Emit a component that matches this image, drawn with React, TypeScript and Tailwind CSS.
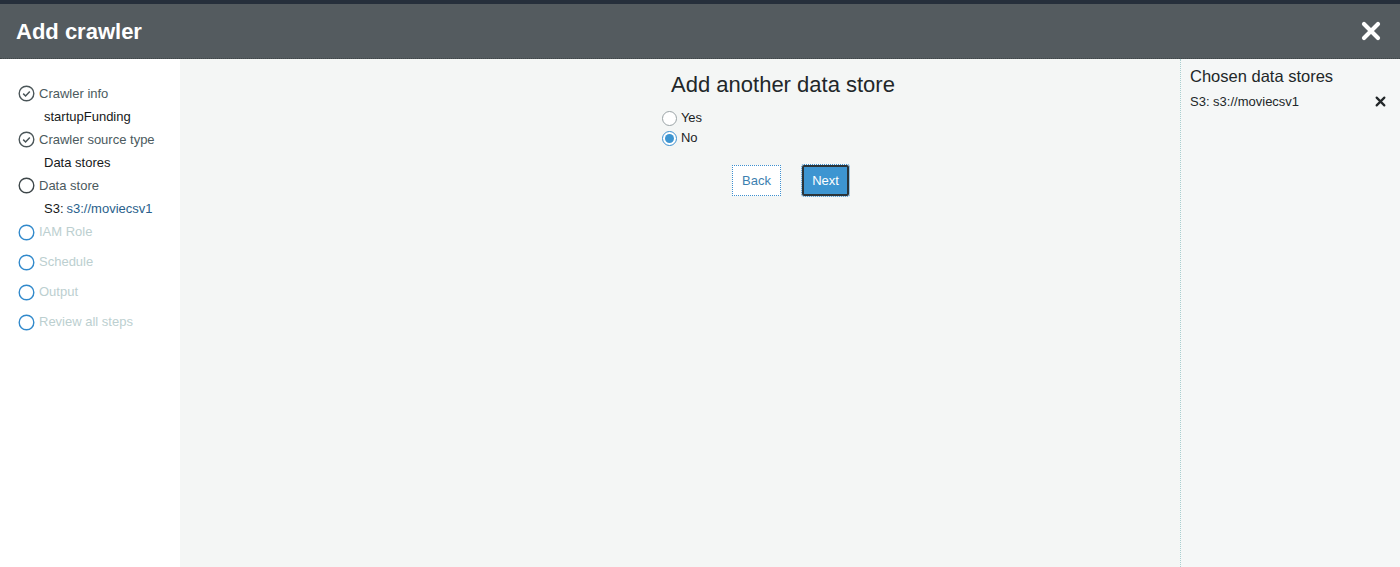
import React from "react";

const Check = ({ color }: { color: string }) => (
  <svg width="17" height="17" viewBox="0 0 17 17" fill="none">
    <circle cx="8.5" cy="8.5" r="7.3" stroke={color} strokeWidth="1.4" />
    <path d="M5.2 8.6 L7.6 11 L11.8 6.5" stroke={color} strokeWidth="1.5" fill="none" />
  </svg>
);

const Circle = ({ color }: { color: string }) => (
  <svg width="17" height="17" viewBox="0 0 17 17" fill="none">
    <circle cx="8.5" cy="8.5" r="7.3" stroke={color} strokeWidth="1.4" />
  </svg>
);

const XIcon = ({ size, stroke, color }: { size: number; stroke: number; color: string }) => (
  <svg width={size} height={size} viewBox="0 0 20 20">
    <path d="M3 3 L17 17 M17 3 L3 17" stroke={color} strokeWidth={stroke} strokeLinecap="round" />
  </svg>
);

export default function App() {
  const font = { fontFamily: '"Liberation Sans", Arial, sans-serif' };
  return (
    <div className="w-[1400px] h-[567px] flex flex-col overflow-hidden" style={font}>
      <div className="h-[4px] bg-[#262f3b]" />
      <div className="h-[55px] bg-[#545b5f] flex items-center justify-between pl-[16px] pr-[19px] border-b border-dotted border-[#3e4547]">
        <div className="text-white font-bold text-[22px] pt-[1px]">Add crawler</div>
        <XIcon size={20} stroke={4.2} color="#ffffff" />
      </div>
      <div className="flex flex-1">
        <div className="w-[180px] bg-white pt-[23px] pl-[18px]">
          <div className="flex flex-col text-[13px]">
            <div className="flex items-center gap-[4px] h-[23px]">
              <Check color="#4a5558" />
              <span className="text-[#4b5a5e]">Crawler info</span>
            </div>
            <div className="h-[23px] pl-[26px] flex items-center text-[#16191a]">startupFunding</div>
            <div className="flex items-center gap-[4px] h-[23px]">
              <Check color="#4a5558" />
              <span className="text-[#4b5a5e]">Crawler source type</span>
            </div>
            <div className="h-[23px] pl-[26px] flex items-center text-[#16191a]">Data stores</div>
            <div className="flex items-center gap-[4px] h-[23px]">
              <Circle color="#3d4649" />
              <span className="text-[#4b5a5e]">Data store</span>
            </div>
            <div className="h-[23px] pl-[26px] flex items-center text-[#16191a]">
              S3: <span className="text-[#2a5f8c] ml-[3px]">s3://moviecsv1</span>
            </div>
            {["IAM Role", "Schedule", "Output", "Review all steps"].map((t, i) => (
              <div key={t} className={`flex items-center gap-[4px] h-[30px] ${i === 0 ? "-mt-[3px]" : ""}`}>
                <Circle color="#3189cb" />
                <span className="text-[#bccfd0]">{t}</span>
              </div>
            ))}
          </div>
        </div>
        <div className="flex-1 bg-[#f4f6f5] flex flex-col items-center pt-[12px] pl-[206px]">
          <div className="text-[22px] text-[#222729] leading-[28px]">Add another data store</div>
          <div className="flex flex-col mt-[9px] ml-[-202px] text-[13px] text-[#1a1d1e]">
            <label className="flex items-center gap-[4px] h-[20px]">
              <span className="w-[15px] h-[15px] rounded-full border border-[#9aa3a6] bg-white inline-block" />
              <span>Yes</span>
            </label>
            <label className="flex items-center gap-[4px] h-[20px]">
              <span className="w-[15px] h-[15px] rounded-full border border-[#3b8fcf] bg-white flex items-center justify-center">
                <span className="w-[9px] h-[9px] rounded-full bg-[#3d95d1]" />
              </span>
              <span>No</span>
            </label>
          </div>
          <div className="flex gap-[21px] mt-[17px] ml-[15px]">
            <button className="w-[49px] h-[31px] bg-white border border-dotted border-[#3d8fcf] text-[#3d7fb0] text-[13px]">Back</button>
            <button className="w-[47px] h-[31px] bg-[#3d95d1] border-2 border-[#2b3438] rounded-[2px] outline outline-1 outline-dotted outline-[#3d8fcf] text-white text-[13px]">Next</button>
          </div>
        </div>
        <div className="w-[220px] bg-[#f5f7f7] border-l border-dotted border-[#a9cfd0] pl-[9px] pr-[14px] pt-[7px]">
          <div className="text-[16.5px] text-[#222729] leading-[20px]">Chosen data stores</div>
          <div className="flex items-center justify-between mt-[6px] text-[13px] text-[#222729]">
            <span>S3: s3://moviecsv1</span>
            <XIcon size={11} stroke={4} color="#222729" />
          </div>
        </div>
      </div>
    </div>
  );
}
